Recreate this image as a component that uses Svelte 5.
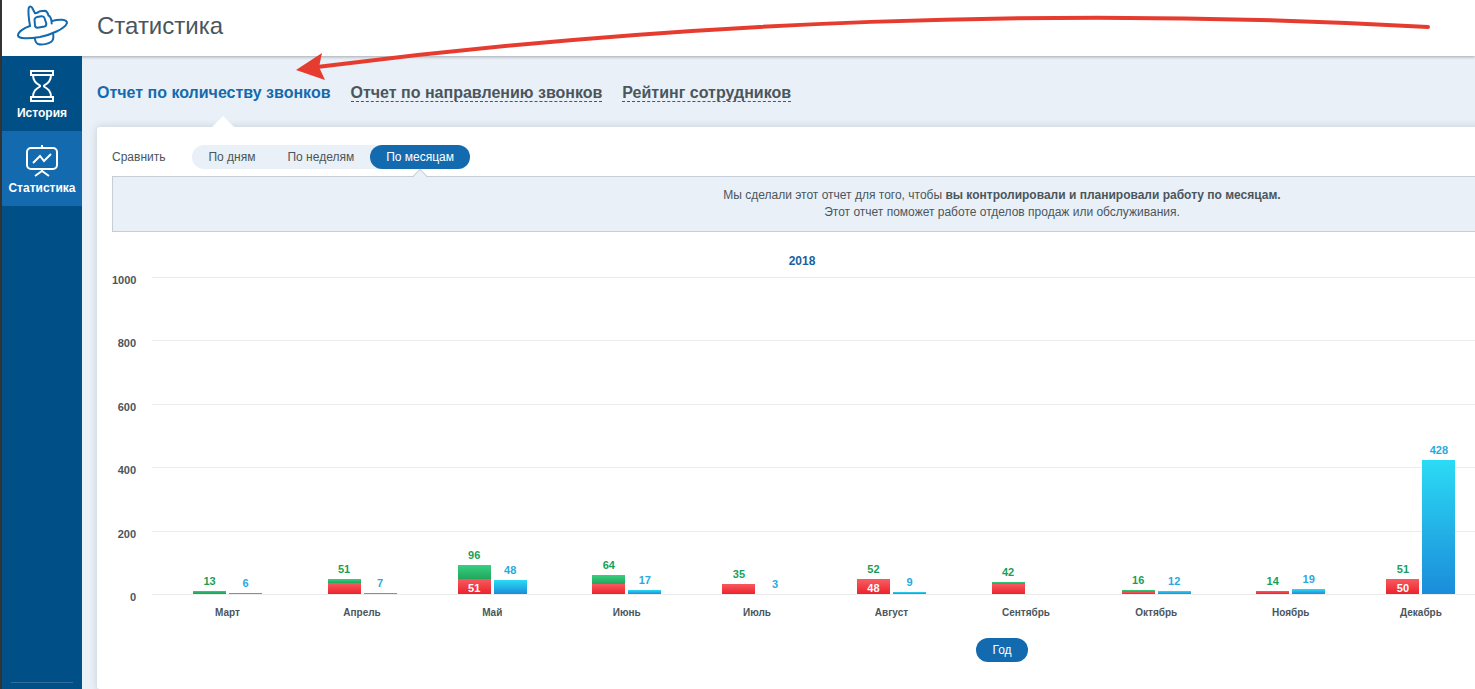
<script>
  const tabs = [
    { id: 'count', title: 'Отчет по количеству звонков' },
    { id: 'direction', title: 'Отчет по направлению звонков' },
    { id: 'rating', title: 'Рейтинг сотрудников' }
  ];
  const periods = ['По дням', 'По неделям', 'По месяцам'];

  // total = answered + missed, label is shown inside the missed part
  const months = [
    { name: 'Март', total: 13, missed: 6, out: 6 },
    { name: 'Апрель', total: 51, missed: 38, out: 7 },
    { name: 'Май', total: 96, missed: 51, label: 51, out: 48 },
    { name: 'Июнь', total: 64, missed: 35, out: 17 },
    { name: 'Июль', total: 35, missed: 35, out: 3 },
    { name: 'Август', total: 52, missed: 48, label: 48, out: 9 },
    { name: 'Сентябрь', total: 42, missed: 36, out: 0 },
    { name: 'Октябрь', total: 16, missed: 9, out: 12 },
    { name: 'Ноябрь', total: 14, missed: 14, out: 19 },
    { name: 'Декабрь', total: 51, missed: 51, label: 50, out: 428 }
  ];

  const ticks = [1000, 800, 600, 400, 200];
  const plotHeight = 316;

  let tab = 'count';
  let period = 'По месяцам';

  function barHeight(value) {
    return Math.max(0, Math.round(value * plotHeight / 1000 - 1));
  }
</script>

<div class="page">
  <header>
    <a class="logo" href="#home" aria-label="Главная">
      <svg width="54" height="44" viewBox="0 0 54 44" fill="none" stroke="#146aae" stroke-width="2" stroke-linecap="round" stroke-linejoin="round">
        <path d="M15 22C14 16 13 8 13.700 4C14.200 2 16 2 17 3.500L20 9.300C22 9.800 23 7.800 25 7.300L30 6.800C32 7.300 32.800 9 33.500 11.500C36 12.500 36.500 15 36.700 19.500" />
        <path d="M15 22C10 23.500 3 27.500 3 31.500C3.500 35 13 35 25 33C35 31 50 25 52 19C52 15 44 15 37 17" />
        <path d="M19.500 15.500Q20 13.500 22 13L26.500 12.200Q29 12 29.500 14L31.300 19.500Q31.500 22 29.500 22.500L22.500 23.700Q20 23.500 20 21.500Z" />
        <path d="M19.700 34C20 37 21 39 23 40C27 41.500 34 39.500 36 38C38.500 36.500 39 34 38 29" />
      </svg>
    </a>
    <h1>Статистика</h1>
  </header>

  <div class="body">
    <nav class="sidebar">
      <a href="#history">
        <svg width="34" height="34" viewBox="0 0 34 34" fill="none" stroke="#fff" stroke-width="2">
          <path d="M6 2H28V6H6ZM6 28H28V32H6ZM8 6C8 12 11 14 15 16.500V17.500C11 20 8 22 8 28M26 6C26 12 23 14 19 16.500V17.500C23 20 26 22 26 28" />
        </svg>
        История
      </a>
      <a href="#stats" class="active">
        <svg width="34" height="34" viewBox="0 0 34 34" fill="none" stroke="#fff" stroke-width="2">
          <rect x="2" y="4" width="30" height="21" rx="4" />
          <path d="M17 1V4M17 25V28M10 32L17 27L24 32" />
          <path d="M8 19L15 12L19 17L26 10" />
        </svg>
        Статистика
      </a>
      <div class="divider"></div>
    </nav>

    <main>
      <div class="tabs">
        {#each tabs as t}
          <button class:active={tab === t.id} on:click={() => tab = t.id}><span>{t.title}</span></button>
        {/each}
      </div>

      <section class="panel">
        <div class="compare">
          <span>Сравнить</span>
          <div class="periods">
            {#each periods as p}
              <button class:active={period === p} on:click={() => period = p}>{p}</button>
            {/each}
          </div>
        </div>

        <div class="info">
          Мы сделали этот отчет для того, чтобы <b>вы контролировали и планировали работу по месяцам.</b><br />
          Этот отчет поможет работе отделов продаж или обслуживания.
        </div>

        <div class="chart">
          <div class="year">2018</div>
          <div class="plot">
            <div class="lines">
              {#each ticks as tick}
                <div class="line"><span>{tick}</span></div>
              {/each}
              <div class="line zero"><span>0</span></div>
            </div>
            <div class="months">
              {#each months as m}
                <div class="month">
                  <div class="stack incoming">
                    <span class="value">{m.total}</span>
                    <div class="answered" style="height: {barHeight(m.total) - barHeight(m.missed)}px"></div>
                    <div class="missed" style="height: {barHeight(m.missed)}px">{m.label ?? ''}</div>
                  </div>
                  <div class="stack outgoing">
                    {#if m.out}
                      <span class="value">{m.out}</span>
                      <div class="out" style="height: {barHeight(m.out)}px"></div>
                    {/if}
                  </div>
                </div>
              {/each}
            </div>
          </div>
          <div class="names">
            {#each months as m}
              <span>{m.name}</span>
            {/each}
          </div>
        </div>

        <button class="scale">Год</button>
      </section>
    </main>
  </div>

  <svg class="arrow" width="1440" height="100" viewBox="0 0 1440 100">
    <path d="M317 67C680 21 1060 6 1428 27" fill="none" stroke="#e63c2f" stroke-width="4" stroke-linecap="round" />
    <path d="M296 70L322 53L319 67L325 80Z" fill="#e63c2f" />
  </svg>
</div>

<style>
  .page {
    position: relative;
    display: flex;
    flex-direction: column;
    box-sizing: border-box;
    min-height: 100vh;
    overflow: hidden;
    border-left: 2px solid #333;
    background: #e9f0f8;
    font-family: Arial, 'Liberation Sans', sans-serif;
    font-size: 12px;
    color: #4a565c;
  }

  button {
    border: 0;
    padding: 0;
    background: none;
    font: inherit;
    color: inherit;
    cursor: pointer;
  }

  header {
    position: relative;
    display: flex;
    align-items: center;
    height: 56px;
    background: #fff;
    box-shadow: 0 1px 3px rgba(0, 0, 0, 0.3);
  }

  .logo {
    display: flex;
    justify-content: center;
    width: 80px;
    padding-bottom: 4px;
  }

  h1 {
    margin: 0;
    padding: 0 15px 4px;
    font-size: 24px;
    font-weight: normal;
  }

  .body {
    display: flex;
    flex: 1;
  }

  .sidebar {
    position: relative;
    display: flex;
    flex: none;
    flex-direction: column;
    width: 80px;
    background: #004f87;
  }

  .sidebar a {
    display: flex;
    flex-direction: column;
    align-items: center;
    gap: 3px;
    height: 62px;
    padding-top: 13px;
    color: #fff;
    font-weight: bold;
    line-height: 14px;
    text-decoration: none;
  }

  .sidebar .active {
    background: #146aae;
  }

  .divider {
    height: 1px;
    margin: auto 9px 6px;
    background: #2f6e9d;
  }

  main {
    display: flex;
    flex: 1;
    flex-direction: column;
    padding: 0 15px;
  }

  .tabs {
    display: flex;
    gap: 20px;
    height: 71px;
  }

  .tabs button {
    position: relative;
    padding-top: 2px;
    font-size: 16px;
    font-weight: bold;
    line-height: 18px;
  }

  .tabs span {
    border-bottom: 1px dashed #4a565c;
  }

  .tabs .active {
    color: #146aae;
  }

  .tabs .active span {
    border-color: transparent;
  }

  .tabs .active::after {
    content: '';
    position: absolute;
    bottom: 0;
    left: 50%;
    border: 11px solid transparent;
    border-top: 0;
    border-bottom-color: #fff;
    margin-left: -2px;
  }

  /* the report is laid out for a wide screen and is cut off on narrower ones */
  .panel {
    flex: 1;
    min-width: 1780px;
    padding: 18px 15px 0;
    border-radius: 3px;
    background: #fff;
    box-shadow: 0 0 8px rgba(0, 0, 0, 0.15);
  }

  .compare {
    display: flex;
    align-items: center;
    gap: 27px;
    margin-bottom: 7px;
  }

  .periods {
    display: flex;
    border-radius: 12px;
    background: #e9f0f8;
  }

  .periods button {
    position: relative;
    height: 24px;
    padding: 0 16px;
    border-radius: 12px;
  }

  .periods .active {
    background: #146aae;
    color: #fff;
  }

  .periods .active::after {
    content: '';
    position: absolute;
    z-index: 1;
    top: 26px;
    left: 50%;
    width: 10px;
    height: 10px;
    border: solid #c5ced5;
    border-width: 1px 0 0 1px;
    background: linear-gradient(135deg, #e9f0f8 50%, transparent 50%);
    transform: translateX(-50%) rotate(45deg);
  }

  .info {
    padding: 10px;
    border: 1px solid #c5ced5;
    background: #e9f0f8;
    line-height: 17px;
    text-align: center;
  }

  .chart {
    padding: 22px 0 0 40px;
    font-size: 11px;
    font-weight: bold;
  }

  .year {
    width: 1300px;
    margin-bottom: 8px;
    color: #1563a2;
    font-size: 12px;
    line-height: 15px;
    text-align: center;
  }

  .plot {
    position: relative;
    height: 318px;
  }

  .lines {
    display: flex;
    flex-direction: column;
    height: 100%;
  }

  .line {
    flex: 1;
    border-top: 1px solid #ececec;
  }

  .zero {
    flex: none;
  }

  .line span {
    display: block;
    width: 40px;
    height: 0;
    margin-left: -40px;
    padding-right: 16px;
    box-sizing: border-box;
    line-height: 4px;
    text-align: right;
  }

  /* March to February, each slot as wide as its month is long */
  .months, .names {
    display: grid;
    grid-template-columns: 31fr 30fr 31fr 30fr 31fr 31fr 30fr 31fr 30fr 31fr 31fr 28fr;
    padding: 0 115px 0 41px;
  }

  .months {
    position: absolute;
    inset: 0 0 1px;
  }

  .month {
    display: flex;
    align-items: flex-end;
    gap: 3px;
  }

  .stack {
    width: 33px;
    line-height: 12px;
    text-align: center;
  }

  .value {
    display: block;
    margin-bottom: 4px;
  }

  .incoming {
    color: #189f58;
  }

  .outgoing {
    color: #29a9e1;
  }

  .answered {
    background: linear-gradient(#38cf82, #21a75c);
  }

  .missed {
    display: flex;
    align-items: flex-end;
    justify-content: center;
    background: linear-gradient(#f75a60, #ed222b);
    color: #fff;
  }

  .out {
    background: linear-gradient(#2bdbf4, #1b8cda);
  }

  .names {
    padding-top: 11px;
    font-size: 10px;
    line-height: 14px;
    text-align: center;
  }

  .names span {
    width: 69px;
  }

  .scale {
    display: block;
    height: 24px;
    margin: 18px auto 0;
    padding: 0 16px;
    border-radius: 12px;
    background: #146aae;
    color: #fff;
  }

  .arrow {
    position: absolute;
    top: 0;
    left: -2px;
    pointer-events: none;
  }
</style>
